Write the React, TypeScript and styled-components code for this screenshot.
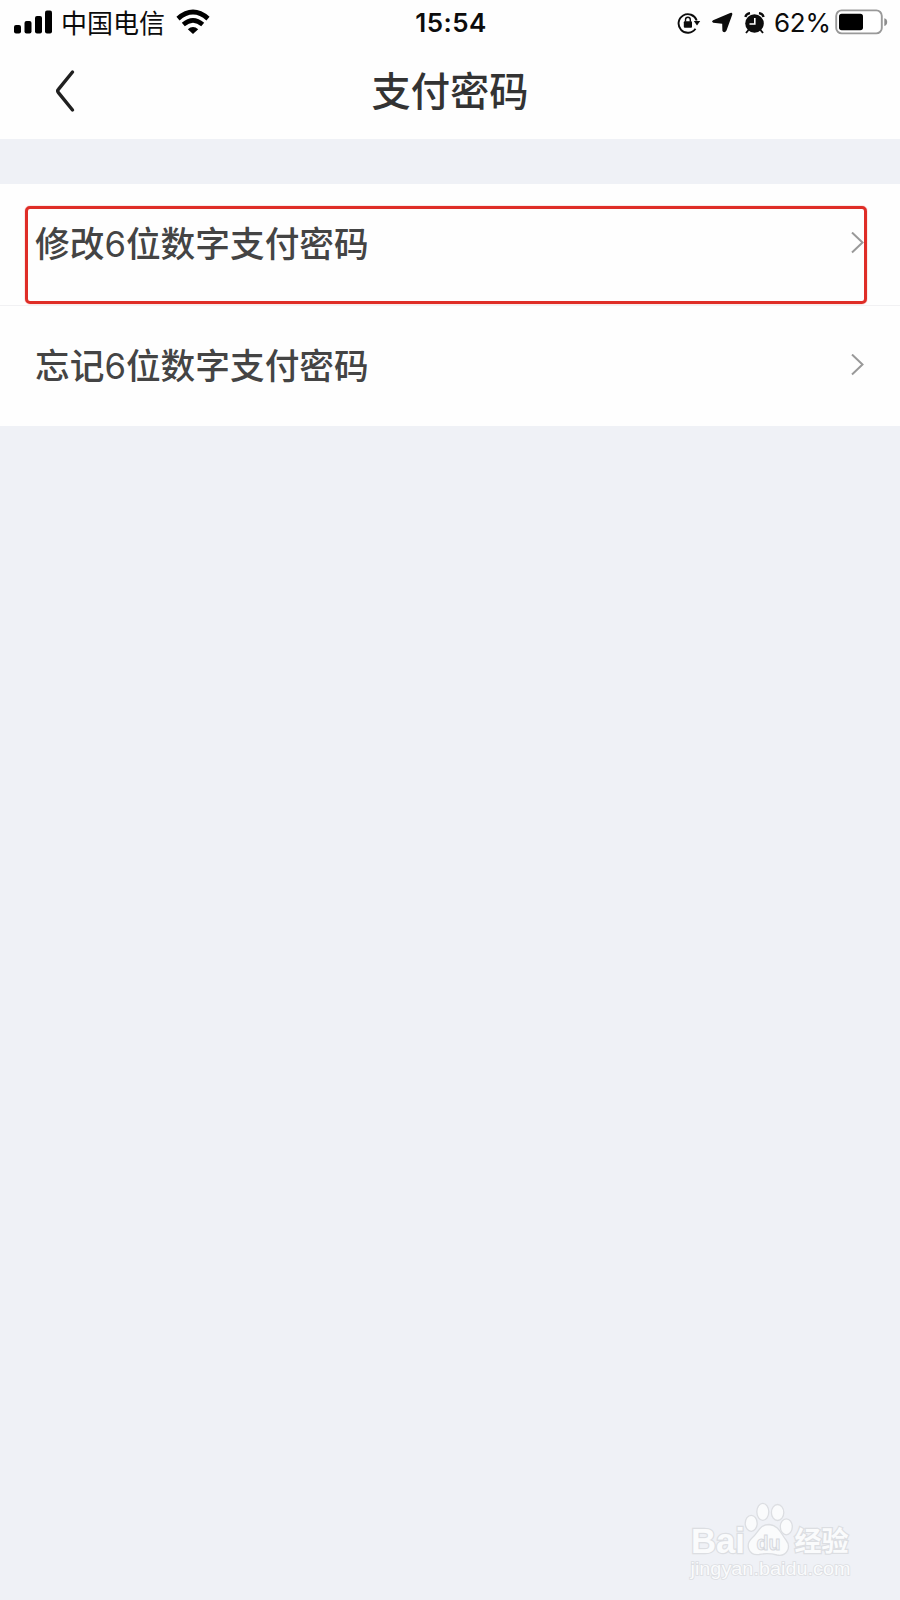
import React from "react";
import styled, { createGlobalStyle } from "styled-components";

const GlobalStyle = createGlobalStyle`
  html, body { margin: 0; padding: 0; background: #eff1f6; }
  * { box-sizing: border-box; }
`;

const Screen = styled.div`
  position: relative;
  width: 900px;
  height: 1600px;
  overflow: hidden;
  background: #eff1f6;
  font-family: Inter, "Noto Sans CJK SC", sans-serif;
`;

const Top = styled.header`
  height: 139px;
  background: #fefefe;
`;

const StatusBar = styled.div`
  display: grid;
  grid-template-columns: 1fr auto 1fr;
  align-items: center;
  height: 46px;
  padding: 0 12px 0 14px;
  color: #0c0c0c;
`;

const StatusGroup = styled.div<{ $end?: boolean }>`
  display: flex;
  align-items: center;
  justify-content: ${(p) => (p.$end ? "flex-end" : "flex-start")};
  height: 46px;
  padding-bottom: 3px;
  svg { display: block; flex: none; }
`;

const StatusIcons = styled.div`
  display: flex;
  align-items: center;
  gap: 11px;
  padding-top: 2px;
`;

const Carrier = styled.span`
  margin: 0 11px 0 9px;
  font-family: "Noto Sans CJK SC", sans-serif;
  font-size: 26px;
  line-height: 43px;
`;

const Clock = styled.span`
  font-size: 26px;
  font-weight: 600;
  line-height: 46px;
  letter-spacing: 0.4px;
`;

const Percent = styled.span`
  width: 55px;
  margin: 0 6px 0 9px;
  padding-top: 2px;
  font-size: 26px;
  line-height: 42px;
  letter-spacing: -0.3px;
  white-space: nowrap;
`;

const NavBar = styled.div`
  display: grid;
  grid-template-columns: 150px 1fr 150px;
  align-items: center;
  height: 90px;
`;

const BackButton = styled.button`
  display: flex;
  padding: 0 0 0 53px;
  border: 0;
  background: none;
`;

const Title = styled.h1`
  margin: 0;
  text-align: center;
  font-family: "Noto Sans CJK SC", sans-serif;
  font-size: 39.3px;
  font-weight: 500;
  line-height: 85px;
  height: 90px;
  color: #333;
`;

const List = styled.main`
  margin-top: 45px;
  background: #fefefe;
`;

const Row = styled.div<{ $divided?: boolean }>`
  position: relative;
  display: flex;
  align-items: flex-start;
  justify-content: space-between;
  height: ${(p) => (p.$divided ? 122 : 120)}px;
  padding: 0 35px 0 35px;
  box-shadow: ${(p) => (p.$divided ? "inset 0 -1px #f1f1f3" : "none")};
  > svg { margin-top: 48px; }
`;

const Label = styled.span`
  font-size: 34.7px;
  font-weight: 500;
  line-height: 121px;
  color: #444;
`;

const Digit = styled.span`
  font-weight: 400;
`;

const Highlight = styled.div`
  position: absolute;
  left: 25px;
  top: 22px;
  width: 842px;
  height: 98px;
  border: 3px solid #df2d27;
  border-radius: 5px;
  box-shadow: 0 0 1px #df2d27;
`;

const Watermark = styled.svg`
  position: absolute;
  left: 680px;
  top: 1495px;
`;

const Signal = () => (
  <svg width="38" height="26" viewBox="0 0 38 26" fill="#000">
    <rect x="0" y="16" width="7" height="8.5" rx="2" />
    <rect x="10.5" y="12" width="7" height="12.5" rx="2" />
    <rect x="21" y="7" width="7" height="17.5" rx="2" />
    <rect x="31" y="1.5" width="7" height="23" rx="2" />
  </svg>
);

const Wifi = () => (
  <svg width="34" height="26" viewBox="0 0 34 26" fill="none" stroke="#000">
    <path d="M2 9.6Q17-3.4 32 9.6" strokeWidth="4.8" />
    <path d="M7.3 15.6Q17 7.3 26.7 15.6" strokeWidth="4.6" />
    <path d="M11.8 20.2Q17 15.6 22.2 20.2L17 25Z" fill="#000" stroke="none" />
  </svg>
);

const RotationLock = () => (
  <svg width="24" height="22" viewBox="0 0 24 22" fill="none" stroke="#0c0c0c" strokeWidth="1.9">
    <path d="M18.5 16.8A9.3 9.3 0 1 1 19.7 8.5" />
    <path d="M16.8 9H23.2L20 13.6Z" fill="#0c0c0c" stroke="none" />
    <rect x="6.8" y="9.2" width="8.2" height="6.6" rx="1" fill="#0c0c0c" stroke="none" />
    <path d="M8.5 9.8V7.7a2.4 2.4 0 0 1 4.8 0v2.1" strokeWidth="1.4" />
  </svg>
);

const Location = () => (
  <svg width="21" height="21" viewBox="0 0 21 21" fill="#0c0c0c">
    <path d="M1.1 8.3L18.2.9Q20.8.1 20.2 2.8L14.5 18.4Q13.2 21 11 19.8L10.4 18.8L10.2 11.7L1.2 10.8Q-1 9.7 1.1 8.3Z" />
  </svg>
);

const Alarm = () => (
  <svg width="21" height="22" viewBox="0 0 21 22" fill="none" stroke="#0c0c0c">
    <circle cx="10.5" cy="11.5" r="9.3" fill="#0c0c0c" stroke="none" />
    <path d="M1.4 5Q2 1.8 6 1M15 1Q19 1.8 19.6 5" strokeWidth="2.3" />
    <path d="M4.5 18L2 21M16.5 18L19 21" strokeWidth="1.9" />
    <path d="M10.8 6V12H5.5" stroke="#fff" strokeWidth="1.6" />
  </svg>
);

const Battery = () => (
  <svg width="53" height="26" viewBox="0 0 53 26">
    <rect x="1.2" y="1.4" width="45.6" height="23" rx="5.5" fill="#fff" stroke="#999" strokeWidth="1.9" />
    <rect x="4" y="4.8" width="24" height="16.5" rx="2.7" fill="#000" />
    <path d="M49.3 9.2Q52.2 10 52.2 13T49.3 17Z" fill="#8d8d8d" />
  </svg>
);

const Back = () => (
  <svg width="24" height="44" viewBox="0 0 24 44" fill="none" stroke="#202020" strokeWidth="3.4" strokeLinecap="round" strokeLinejoin="round">
    <path d="M19.5 3L5.4 20.4Q4 22 5.4 23.6L19.5 41" />
  </svg>
);

const Chevron = () => (
  <svg width="14" height="22" viewBox="0 0 14 22" fill="none" stroke="#999" strokeWidth="2">
    <path d="M1 .5L11.5 10.5L1 20.5" />
  </svg>
);

const items = [
  { action: "修改", highlighted: true },
  { action: "忘记", highlighted: false },
];

export default function App() {
  return (
    <Screen>
      <GlobalStyle />
      <Top>
        <StatusBar>
          <StatusGroup>
            <Signal />
            <Carrier>中国电信</Carrier>
            <Wifi />
          </StatusGroup>
          <Clock>15:54</Clock>
          <StatusGroup $end>
            <StatusIcons>
              <RotationLock />
              <Location />
              <Alarm />
            </StatusIcons>
            <Percent>62%</Percent>
            <Battery />
          </StatusGroup>
        </StatusBar>
        <NavBar>
          <BackButton aria-label="返回"><Back /></BackButton>
          <Title>支付密码</Title>
        </NavBar>
      </Top>
      <List>
        {items.map((item) => (
          <Row key={item.action} $divided={item.highlighted}>
            <Label>{item.action}<Digit>6</Digit>位数字支付密码</Label>
            <Chevron />
            {item.highlighted && <Highlight />}
          </Row>
        ))}
      </List>
      <Watermark width="180" height="95" viewBox="0 0 180 95" fill="#fafbfc" stroke="#dcdee2" strokeWidth="1.3">
        <g fontWeight="700" paintOrder="stroke" strokeWidth="2.4">
          <text x="11" y="58" fontFamily="Liberation Sans, sans-serif" fontSize="35" textLength="54" lengthAdjust="spacingAndGlyphs">Bai</text>
          <text x="114.5" y="56" fontFamily="Noto Sans CJK SC, sans-serif" fontSize="27">经验</text>
        </g>
        <ellipse cx="71.2" cy="28.3" rx="6" ry="8" />
        <ellipse cx="82.8" cy="16.8" rx="6" ry="8.5" />
        <ellipse cx="97.6" cy="17.5" rx="6.2" ry="8" />
        <ellipse cx="106.3" cy="31.8" rx="6" ry="8" />
        <path d="M89 29.5C79 29.5 78.5 38 72 43C64.5 50 69 61 79 59.5C84 58.5 91 58.5 97 60C107 62 111.5 52 106 45C101 39 99 30 89 29.5Z" />
        <text x="76.5" y="55" fontFamily="Liberation Sans, sans-serif" fontSize="21" fontWeight="700" textLength="24" lengthAdjust="spacingAndGlyphs" fill="#f3f5f8" stroke="#d6d8dd" strokeWidth="1">du</text>
        <text x="10.5" y="80" fontFamily="Liberation Sans, sans-serif" fontSize="19" textLength="160" lengthAdjust="spacingAndGlyphs" paintOrder="stroke" strokeWidth="1.6">jingyan.baidu.com</text>
      </Watermark>
    </Screen>
  );
}
